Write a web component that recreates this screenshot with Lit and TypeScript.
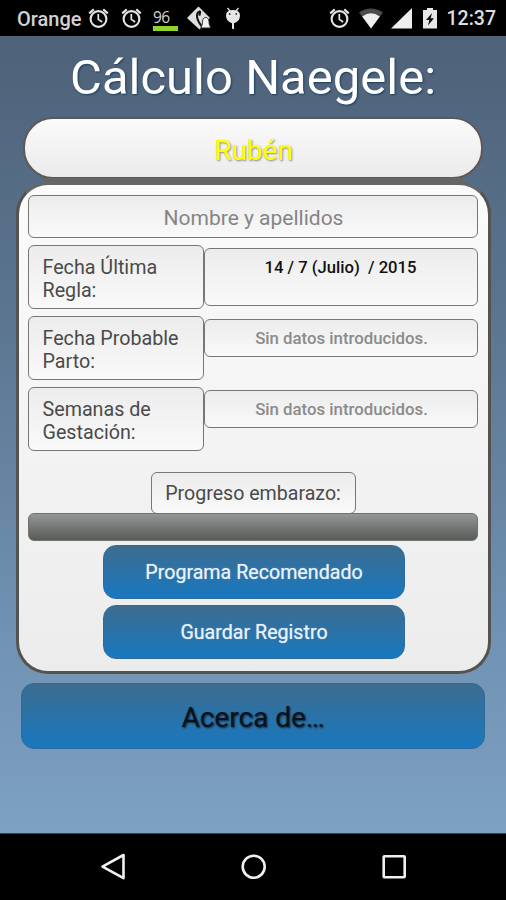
import { LitElement, html, css, svg } from "lit";
import { customElement } from "lit/decorators.js";

const alarm = html`<svg class="alarm" width="22" height="22" viewBox="0 0 22 22">
  <g fill="none" stroke="#e4e4e4">
    <circle cx="10.500" cy="12" r="7.9" stroke-width="2.1" />
    <path d="M1.2 6.3 5.8 2.4M19.8 6.3 15.2 2.4" stroke-width="2.2" />
    <path d="M10.3 7v5.4l3.9 2.6" stroke-width="1.7" />
  </g>
</svg>`;

@customElement("status-bar")
export class StatusBar extends LitElement {
  static styles = css`
    :host { display: flex; height: 36px; background: #000; color: #dedede; align-items: center;
      font: 500 20px/38px Roboto, sans-serif; box-sizing: border-box; padding: 0 10.5px 0 17px; }
    svg { display: block; flex: none; }
    .carrier { width: 70.5px; white-space: nowrap; color: #d2d2d2; padding-top: 1px; }
    .second { margin-left: 11px; }
    .level { width: 25px; margin: 3px 0 0 10.5px; height: 22px; display: flex; flex-direction: column; justify-content: space-between; }
    .num { font: 400 15.5px/17px "Open Sans", sans-serif; letter-spacing: -0.6px; color: #d4d4d4; }
    .green { height: 4.5px; background: #8fd42a; }
    .tag { margin-left: 9px; }
    .droid { margin-left: 13px; }
    .space { flex: 1; }
    .wifi { margin-left: 8.5px; }
    .signal { margin-left: 8px; }
    .battery { margin-left: 11px; }
    .clock { margin-left: 9.500px; font-size: 19.500px; width: 49px; padding-top: 2px; white-space: nowrap; }
  `;
  render() {
    return html`
      <span class="carrier">Orange</span>${alarm}
      <span class="second">${alarm}</span>
      <div class="level"><span class="num">96</span><span class="green"></span></div>
      <svg class="tag" width="25" height="24" viewBox="0 0 25 24">
        <path d="M11.500 1.500 22 12 12.500 22.500 1 12Z" fill="#dedede" stroke="#dedede" stroke-width="1.5" stroke-linejoin="round" />
        <path d="M12.800 5.500c-4 1-4 7 1.700 14.500" fill="none" stroke="#111" stroke-width="2" />
        <path d="M12 4.500l2.200.5-.6 4.500-2.200.3Z" fill="#111" />
        <path d="M18.700 11.500c3 0 3.400 3.500 3.500 6.500l1.600 4h-10l1.500-4c.1-3 .4-6.500 3.400-6.500Z" fill="#f2f2f2" stroke="#222" stroke-width="1" />
      </svg>
      <svg class="droid" width="16" height="24" viewBox="0 0 16 24">
        <path d="M2.500 2 5 5M13.500 2 11 5" stroke="#dedede" stroke-width="1.3" />
        <path d="M1 9.500Q1 4 8 4t7 5.500Q15 15.500 9 17.200V22.500q-1 1.500-2 0v-5.300Q1 15.500 1 9.500Z" fill="#e6e6e6" />
        <circle cx="4.700" cy="8" r=".9" fill="#333" /><circle cx="11.300" cy="8" r=".9" fill="#333" />
      </svg>
      <span class="space"></span>
      ${alarm}
      <svg class="wifi" width="24" height="21" viewBox="0 0 24 21">
        <path d="M0 4.500Q12-3.500 24 4.500L12 20.500Z" fill="#4c4c4c" />
        <path d="M3.200 8.400Q12 2 20.800 8.400L12 20.500Z" fill="#eee" />
      </svg>
      <svg class="signal" width="21" height="21" viewBox="0 0 21 21"><path d="M0 20.500 21 0v20.500Z" fill="#eee" /></svg>
      <svg class="battery" width="14" height="21" viewBox="0 0 14 21">
        <path d="M4 0h6v2h4v18.500H0V2h4Z" fill="#e8e8e8" />
        <path d="M9 5 3 12h3.300L5 17.500 11 10.300H7.700Z" fill="#111" />
      </svg>
      <span class="clock">12:37</span>`;
  }
}

@customElement("nav-bar")
export class NavBar extends LitElement {
  static styles = css`
    :host { display: flex; box-sizing: border-box; height: 67px; background: #000; border-top: 1px solid #33435a; justify-content: center;
      align-items: center; gap: 112px; padding-left: 1px; }
    svg { display: block; }
  `;
  render() {
    const icon = (shape: unknown) => html`<svg width="28" height="28" viewBox="0 0 28 28" fill="none" stroke="#f0f0f0" stroke-width="2.600" stroke-linejoin="round">${shape}</svg>`;
    return html`
      ${icon(svg`<path d="M2.500 13.700 23.500 2V25.200Z" />`)}
      ${icon(svg`<circle cx="13.700" cy="13.700" r="11" />`)}
      ${icon(svg`<rect x="3.700" y="3.200" width="21" height="21" rx=".8" />`)}`;
  }
}

@customElement("app-root")
export class AppRoot extends LitElement {
  static styles = css`
    :host { display: flex; flex-direction: column; width: 506px; height: 900px; overflow: hidden;
      font-family: Roboto, sans-serif; }
    * { box-sizing: border-box; }
    .screen { flex: 1; display: flex; flex-direction: column; align-items: center;
      background: linear-gradient(#4e6279, #5b758f 35%, #7092b3 75%, #7da1c3); }
    h1 { margin: 0; height: 81px; font-weight: 400; font-size: 49px; line-height: 84px; color: #fff;
      text-shadow: 1px 1px 2px #1b3e5b; white-space: nowrap; }
    .name { width: 460px; height: 62px; border: 2px solid #5d5957; border-radius: 30px; text-align: center;
      background: linear-gradient(#fafafa, #ebebeb); color: #ff0; font-size: 28px; line-height: 63px;
      padding-left: 1px; text-shadow: 1px 1px 2px #888; }
    .link { width: 420px; height: 6px; margin: -1px 0 -2px; background: #666; flex: none; }
    .panel { width: 475px; height: 492px; border: 3px solid #555350; border-top-color: #666; border-radius: 32px;
      background: linear-gradient(#fbfbfb, #ececec); padding: 10px 10px 0; display: flex; flex-direction: column; align-items: center; }
    .box { border: 1.500px solid #777; border-radius: 6px; background: linear-gradient(#ececec, #f9f9f9); color: #4a4a4a; }
    .full { width: 450px; height: 43px; text-align: center; color: #858585; font-size: 21px; line-height: 44px; padding-left: 1px; }
    .row { display: flex; width: 450px; height: 71px; }
    .rows { padding-top: 7px; }
    .label { width: 176px; height: 64px; padding: 10px 0 0 13.500px; font-size: 19.700px; line-height: 23px; }
    .value { width: 274px; height: 38px; margin-top: 3px; text-align: center; font-size: 16.800px; line-height: 37px;
      padding-left: 1px; font-weight: 500; color: #8b8b8b; }
    .date { height: 58px; color: #111; font-size: 16.650px; white-space: pre; padding: 0 1px 0 0; }
    .caption { margin-top: 14px; width: 205px; height: 42px; text-align: center; font-size: 19.600px; line-height: 42px; flex: none; }
    .bar { width: 450px; height: 28px; margin-top: -1px; border-radius: 6px; background: linear-gradient(#939694, #585b58); border: 1px solid #70736f; flex: none; }
    .btn { width: 302px; height: 54px; border-radius: 13px; border: 1px solid #2c6b9c; text-align: center; flex: none;
      background: linear-gradient(#3d6c90, #1878bf); color: #e9f1f8; font-size: 19.650px; line-height: 54px; text-shadow: 0 0 1px #bcd; }
    .action { position: relative; left: 0.5px; padding-left: 1px; }
    .first { margin: 4px 0 6px; }
    .about { margin-top: 9px; width: 464px; height: 66px; font-size: 28px; line-height: 68px; color: #06121c; text-shadow: 1px 1px 2px #123; }
  `;
  render() {
    return html`
      <status-bar></status-bar>
      <div class="screen">
        <h1>Cálculo Naegele:</h1>
        <div class="name">Rubén</div>
        <div class="link"></div>
        <div class="panel">
          <div class="box full">Nombre y apellidos</div>
          <div class="rows">
            <div class="row"><div class="box label">Fecha Última<br />Regla:</div><div class="box value date">14 / 7 (Julio)  / 2015</div></div>
            <div class="row"><div class="box label">Fecha Probable<br />Parto:</div><div class="box value">Sin datos introducidos.</div></div>
            <div class="row"><div class="box label">Semanas de<br />Gestación:</div><div class="box value">Sin datos introducidos.</div></div>
          </div>
          <div class="box caption">Progreso embarazo:</div>
          <div class="bar"></div>
          <div class="btn action first">Programa Recomendado</div>
          <div class="btn action">Guardar Registro</div>
        </div>
        <div class="btn about">Acerca de…</div>
      </div>
      <nav-bar></nav-bar>`;
  }
}
